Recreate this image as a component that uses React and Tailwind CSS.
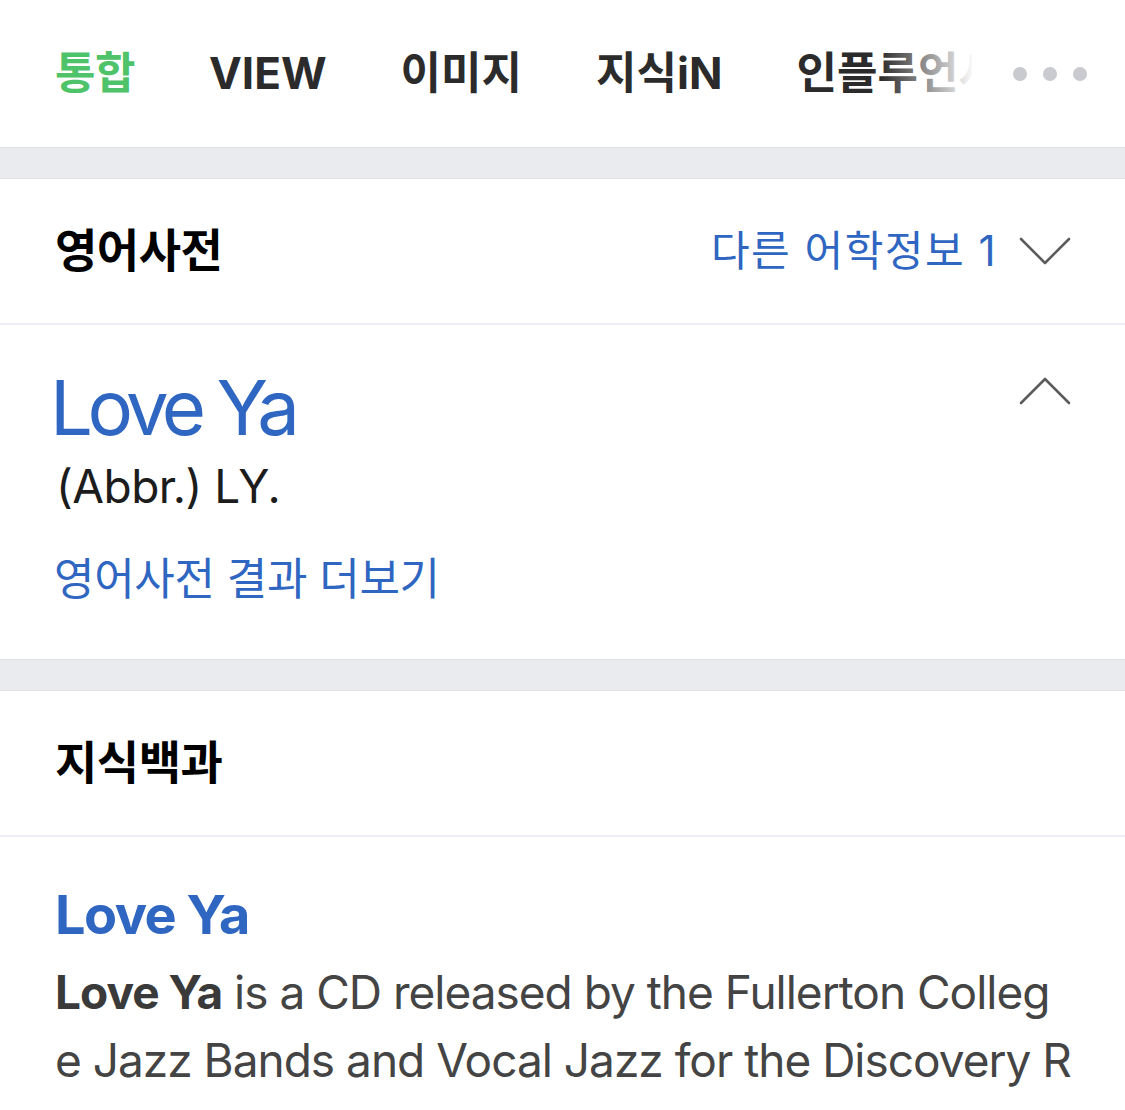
import React from 'react';

const tabs = ['VIEW', '이미지', '지식iN', '인플루언서', '동영상'];

const Chevron = ({ up }) => (
  <svg width="52" height="28" viewBox="0 0 52 28" fill="none" className="shrink-0">
    <path
      d={up ? 'M2 26 L26 2 L50 26' : 'M2 2 L26 26 L50 2'}
      stroke="#5c5c5c"
      strokeWidth="2.6"
      strokeLinecap="round"
      strokeLinejoin="round"
    />
  </svg>
);

const Band = () => <div className="h-[32px] bg-[#e9ebee] border-y border-[#dfe1e5]" />;

const App = () => {
  return (
    <div
      className="w-[1125px] h-[1110px] overflow-hidden bg-white"
      style={{ fontFamily: 'Inter, "Noto Sans CJK KR", sans-serif' }}
    >
      {/* Tabs */}
      <div className="relative h-[147px] flex items-center">
        <div className="w-[972px] overflow-hidden flex items-center gap-[74px] pl-[55px] whitespace-nowrap">
          <span className="text-[44px] font-bold leading-tight tracking-[-0.5px] text-[#4fc36a]">통합</span>
          {tabs.map((t) => (
            <span key={t} className="text-[44px] font-bold leading-tight tracking-[0px] text-[#2b2b2b]">
              {t}
            </span>
          ))}
        </div>
        <div className="absolute left-[880px] top-0 h-full w-[95px] bg-gradient-to-r from-white/0 to-white" />
        <div className="flex items-center gap-[16px] pl-[41px]">
          <span className="w-[14px] h-[14px] rounded-full bg-[#c8cacf]" />
          <span className="w-[14px] h-[14px] rounded-full bg-[#c8cacf]" />
          <span className="w-[14px] h-[14px] rounded-full bg-[#c8cacf]" />
        </div>
      </div>

      <Band />

      {/* 영어사전 */}
      <div className="h-[144px] flex items-center justify-between pl-[55px] pr-[54px]">
        <h2 className="text-[46px] font-bold leading-tight tracking-[-0.5px] text-black">영어사전</h2>
        <div className="flex items-center gap-[22px]">
          <span className="text-[42px] leading-tight tracking-[1.5px] text-[#2e66c1]">다른 어학정보 1</span>
          <Chevron />
        </div>
      </div>
      <div className="h-[2px] bg-[#eceef1]" />

      <div className="h-[334px] pl-[50px] pr-[54px] pt-[44px]">
        <div className="flex justify-between items-start">
          <div className="text-[76px] leading-none tracking-[-5.5px] text-[#2e66c1]">Love Ya</div>
          <div className="pt-[8px]">
            <Chevron up />
          </div>
        </div>
        <div className="mt-[18px] pl-[6px] text-[46px] leading-none tracking-[-0.5px] text-[#1c1c1c]">(Abbr.) LY.</div>
        <div className="mt-[48px] pl-[4px] text-[44px] leading-none tracking-[-0.3px] text-[#2e66c1]">
          영어사전 결과 더보기
        </div>
      </div>

      <Band />

      {/* 지식백과 */}
      <div className="h-[144px] flex items-center pl-[55px]">
        <h2 className="text-[46px] font-bold leading-tight tracking-[-0.5px] text-black">지식백과</h2>
      </div>
      <div className="h-[2px] bg-[#eceef1]" />

      <div className="pl-[55px] pr-[50px] pt-[51px]">
        <div className="text-[54px] font-bold leading-none tracking-[-1.5px] text-[#2e66c1]">Love Ya</div>
        <p className="mt-[16px] text-[46px] leading-[68px] tracking-[-1px] text-[#444] break-all">
          <b className="font-bold text-[#3a3a3a]">Love Ya</b> is a CD released by the Fullerton College Jazz Bands and Vocal Jazz for the Discovery Records label in 1991.
        </p>
      </div>
    </div>
  );
};

export default App;
